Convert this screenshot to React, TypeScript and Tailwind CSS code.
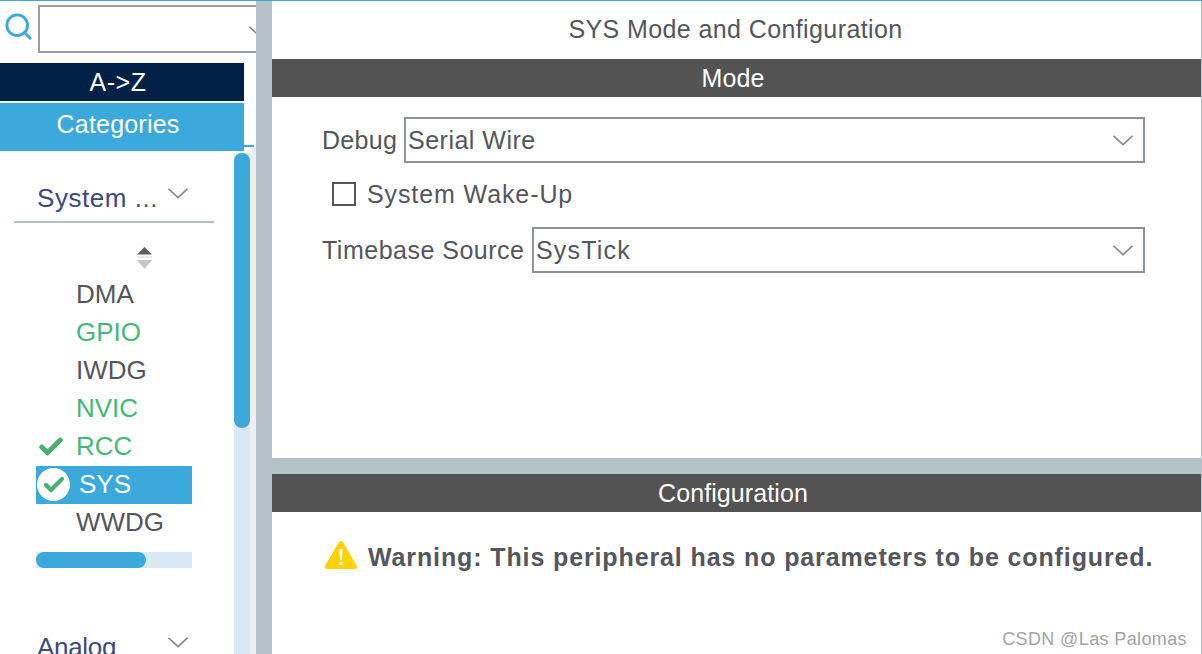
import { Search, Check } from 'lucide-react';

const FONT = "font-['Liberation_Sans',Arial,sans-serif]";

const items = [
  { label: 'DMA', color: 'text-[#54565c]' },
  { label: 'GPIO', color: 'text-[#45b878]' },
  { label: 'IWDG', color: 'text-[#54565c]' },
  { label: 'NVIC', color: 'text-[#45b878]' },
  { label: 'RCC', color: 'text-[#45b878]', checked: true },
  { label: 'SYS', color: 'text-white', active: true },
  { label: 'WWDG', color: 'text-[#54565c]' },
];

function Chevron({ className }: { className: string }) {
  return (
    <svg viewBox="0 0 20 11" fill="none" stroke="#85898c" strokeWidth="1.6" className={className}>
      <path d="M0.5 0.8 L10 9.6 L19.5 0.8" />
    </svg>
  );
}

function SelectBox({ value, className, tracking }: { value: string; className: string; tracking: string }) {
  return (
    <div className={`h-[46px] border-2 border-[#8e9398] flex items-center justify-between pl-[2px] pr-[10px] ${className}`}>
      <span className={`text-[25px] pt-[1px] text-[#54565c] ${tracking}`}>{value}</span>
      <Chevron className="w-[20px] h-[11px]" />
    </div>
  );
}

function Sidebar() {
  return (
    <aside className="w-[256px] shrink-0 flex flex-col">
      <div className="h-[62px] flex items-start pt-[4px]">
        <Search size={31} strokeWidth={2.2} className="ml-[3px] mt-[6px] text-[#3ba9dc] shrink-0" />
        <div className="ml-[4px] flex-1 h-[48px] border-y-2 border-l-2 border-[#9a9ea2] flex items-center justify-end overflow-hidden">
          <Chevron className="w-[20px] h-[11px] -mr-[13px] mt-[4px] shrink-0" />
        </div>
      </div>
      <div className="w-[244px] h-[38px] bg-[#002147] text-white text-[25px] tracking-[0.5px] flex items-center justify-center pr-[8px] pt-[1px]">
        A-&gt;Z
      </div>
      <div className="flex mt-[2px]">
        <div className="w-[244px] h-[48px] bg-[#3ba9dc] text-white text-[25px] tracking-[0.2px] flex items-center justify-center pb-[4px] pr-[8px]">
          Categories
        </div>
        <div className="self-end mb-[4px] w-[10px] h-[2px] bg-[#3ba9dc]" />
      </div>
      <div className="flex-1 flex min-h-0">
        <div className="w-[234px] shrink-0 flex flex-col overflow-hidden">
          <div className="ml-[14px] w-[200px] h-[72px] border-b-2 border-[#b6c2c9] flex items-start justify-between pl-[23px] pr-[26px] pt-[31px] shrink-0">
            <span className="text-[26px] leading-[32px] text-[#3c4a78] tracking-[0.55px] whitespace-nowrap">
              System <span className="text-[#54565c]">...</span>
            </span>
            <Chevron className="w-[20px] h-[11px] mt-[6px] shrink-0" />
          </div>
          <svg viewBox="0 0 17 22" className="w-[17px] h-[22px] ml-[136px] mt-[24px] shrink-0">
            <path d="M8.5 0 L16 7.5 H1 Z" fill="#5a5c5e" />
            <path d="M1 9.5 H16 V10.5 H1 Z" fill="#d5d7d9" />
            <path d="M1 13 H16 L8.5 22 Z" fill="#c4c6c8" />
          </svg>
          <div className="flex flex-col mt-[7px] shrink-0">
            {items.map((item) => (
              <div
                key={item.label}
                className={`relative ml-[36px] w-[156px] h-[38px] flex items-center pb-[2px] text-[26px] ${item.active ? 'bg-[#3ba9dc] pl-[43px]' : 'pl-[40px]'} ${item.color}`}
              >
                {item.checked && (
                  <Check size={28} strokeWidth={4.2} className="absolute left-[1px] top-[5px] text-[#45b06f]" />
                )}
                {item.active && (
                  <div className="absolute left-[1px] top-[2px] w-[33px] h-[33px] rounded-full bg-white flex items-center justify-center">
                    <Check size={24} strokeWidth={4.2} className="text-[#45b06f]" />
                  </div>
                )}
                {item.label}
              </div>
            ))}
          </div>
          <div className="ml-[36px] mt-[10px] w-[156px] h-[16px] bg-[#d9e8f5] shrink-0">
            <div className="w-[110px] h-full bg-[#3ba9dc] rounded-full" />
          </div>
          <div className="mt-[63px] ml-[37px] w-[151px] flex justify-between items-start shrink-0">
            <span className="text-[26px] leading-[32px] tracking-[-0.3px] text-[#3c4a78]">Analog</span>
            <Chevron className="w-[20px] h-[11px] mt-[6px]" />
          </div>
        </div>
        <div className="w-[16px] mt-[2px] bg-[#d9e8f5]">
          <div className="h-[275px] bg-[#3ba9dc] rounded-full" />
        </div>
        <div className="w-[6px] -mt-[4px] bg-[#eef0f2]" />
      </div>
    </aside>
  );
}

function SectionBar({ title }: { title: string }) {
  return (
    <div className="h-[38px] shrink-0 bg-[#525352] text-white text-[25px] tracking-[0.1px] flex items-center justify-center pr-[7px] pt-[1px]">
      {title}
    </div>
  );
}

export default function App() {
  return (
    <div className={`w-[1202px] h-[654px] overflow-hidden bg-white flex flex-col border-t border-[#3ba9dc] ${FONT}`}>
      <div className="flex-1 flex min-h-0">
        <Sidebar />
        <main className="flex-1 flex flex-col border-l-[16px] border-r border-[#b6c2c9] min-w-0">
          <div className="h-[58px] shrink-0 flex items-center justify-center pr-[2px] text-[25px] tracking-[0.4px] text-[#54565c]">
            SYS Mode and Configuration
          </div>
          <SectionBar title="Mode" />
          <div className="h-[361px] shrink-0 pt-[20px] pl-[50px] text-[25px] text-[#54565c]">
            <div className="flex items-center w-[823px]">
              <span className="w-[82px] tracking-[0.3px] pt-[1px]">Debug</span>
              <SelectBox value="Serial Wire" tracking="tracking-[0.5px]" className="flex-1" />
            </div>
            <div className="flex items-center ml-[10px] mt-[18px] h-[26px]">
              <div className="w-[24px] h-[24px] border-2 border-[#555555]" />
              <span className="ml-[11px] tracking-[0.9px] pt-[1px]">System Wake-Up</span>
            </div>
            <div className="flex items-center w-[823px] mt-[20px]">
              <span className="w-[210px] tracking-[0.5px] whitespace-nowrap pt-[1px]">Timebase Source</span>
              <SelectBox value="SysTick" tracking="tracking-[1.2px]" className="flex-1" />
            </div>
          </div>
          <div className="h-[16px] shrink-0 bg-[#b6c2c9]" />
          <SectionBar title="Configuration" />
          <div className="flex-1 flex flex-col justify-between pl-[52px] pr-[14px] pt-[27px] pb-[3px]">
            <div className="flex items-center text-[25px] font-bold tracking-[0.88px] text-[#54565c] whitespace-nowrap">
              <svg viewBox="0 0 34 30" className="w-[34px] h-[30px] shrink-0 -mt-[5px]">
                <path d="M17 1 Q18.5 1 19.5 3 L33 26 Q34.5 29 31 29 H3 Q-0.5 29 1 26 L14.5 3 Q15.5 1 17 1 Z" fill="#ffd200" />
                <path d="M15.4 9 H18.6 L18 20 H16 Z" fill="#fff" />
                <rect x="15.4" y="22" width="3.2" height="3.2" fill="#fff" />
              </svg>
              <span className="ml-[10px]">Warning: This peripheral has no parameters to be configured.</span>
            </div>
            <div className="self-end text-[18px] leading-[24px] tracking-[0.38px] text-[#a3a3a3]">CSDN @Las Palomas</div>
          </div>
        </main>
      </div>
    </div>
  );
}
